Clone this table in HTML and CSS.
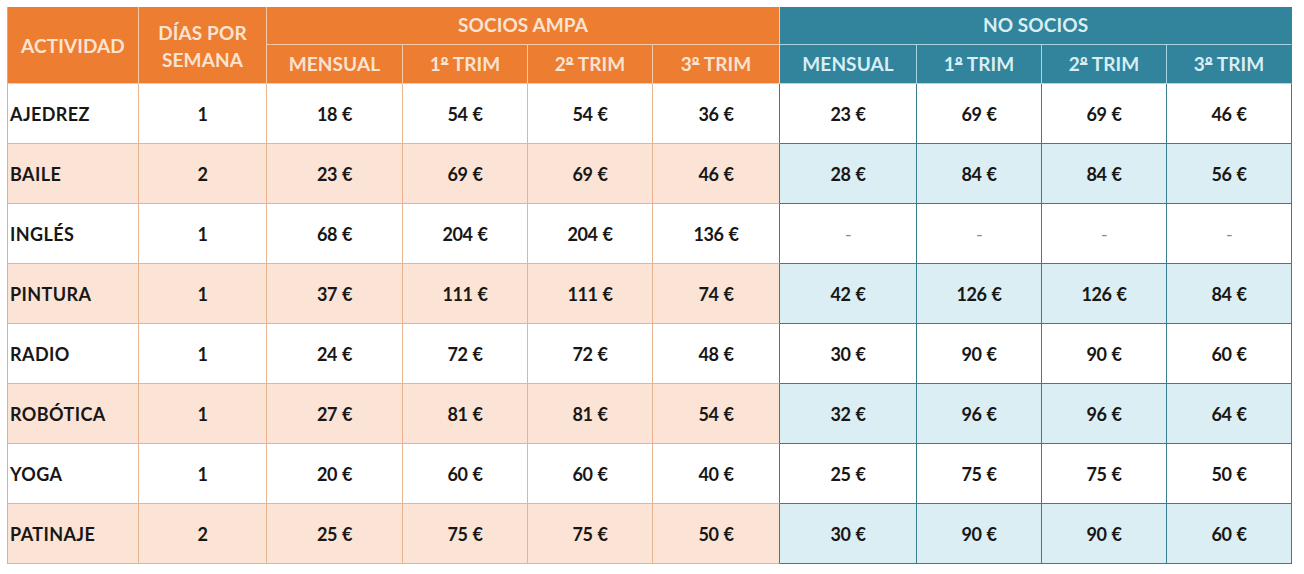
FILE: index.html
```html
<!DOCTYPE html>
<html lang="es">
<head>
<meta charset="utf-8">
<title>Actividades extraescolares</title>
<link rel="stylesheet" href="styles.css">
</head>
<body>
<div class="wrap">
<table class="tarifas">
  <colgroup>
    <col class="c-act"><col class="c-dias">
    <col class="c-m1"><col class="c-t"><col class="c-t"><col class="c-t3">
    <col class="c-m2"><col class="c-t"><col class="c-t"><col class="c-t">
  </colgroup>
  <thead>
    <tr class="h1">
      <th class="o first" rowspan="2">ACTIVIDAD</th>
      <th class="o dias" rowspan="2">DÍAS POR<br>SEMANA</th>
      <th class="o grp" colspan="4">SOCIOS AMPA</th>
      <th class="b grp last" colspan="4">NO SOCIOS</th>
    </tr>
    <tr class="h2">
      <th class="o">MENSUAL</th>
      <th class="o">1<span class="ord">º</span> TRIM</th>
      <th class="o">2<span class="ord">º</span> TRIM</th>
      <th class="o edge">3<span class="ord">º</span> TRIM</th>
      <th class="b">MENSUAL</th>
      <th class="b">1<span class="ord">º</span> TRIM</th>
      <th class="b">2<span class="ord">º</span> TRIM</th>
      <th class="b last">3<span class="ord">º</span> TRIM</th>
    </tr>
  </thead>
  <tbody>
    <tr><td class="name">AJEDREZ</td><td class="o">1</td><td class="o">18 €</td><td class="o">54 €</td><td class="o">54 €</td><td class="o edge">36 €</td><td class="b">23 €</td><td class="b">69 €</td><td class="b">69 €</td><td class="b">46 €</td></tr>
    <tr class="alt"><td class="name">BAILE</td><td class="o">2</td><td class="o">23 €</td><td class="o">69 €</td><td class="o">69 €</td><td class="o edge">46 €</td><td class="b">28 €</td><td class="b">84 €</td><td class="b">84 €</td><td class="b">56 €</td></tr>
    <tr><td class="name">INGLÉS</td><td class="o">1</td><td class="o">68 €</td><td class="o">204 €</td><td class="o">204 €</td><td class="o edge">136 €</td><td class="b dash">-</td><td class="b dash">-</td><td class="b dash">-</td><td class="b dash">-</td></tr>
    <tr class="alt"><td class="name">PINTURA</td><td class="o">1</td><td class="o">37 €</td><td class="o">111 €</td><td class="o">111 €</td><td class="o edge">74 €</td><td class="b">42 €</td><td class="b">126 €</td><td class="b">126 €</td><td class="b">84 €</td></tr>
    <tr><td class="name">RADIO</td><td class="o">1</td><td class="o">24 €</td><td class="o">72 €</td><td class="o">72 €</td><td class="o edge">48 €</td><td class="b">30 €</td><td class="b">90 €</td><td class="b">90 €</td><td class="b">60 €</td></tr>
    <tr class="alt"><td class="name">ROBÓTICA</td><td class="o">1</td><td class="o">27 €</td><td class="o">81 €</td><td class="o">81 €</td><td class="o edge">54 €</td><td class="b">32 €</td><td class="b">96 €</td><td class="b">96 €</td><td class="b">64 €</td></tr>
    <tr><td class="name">YOGA</td><td class="o">1</td><td class="o">20 €</td><td class="o">60 €</td><td class="o">60 €</td><td class="o edge">40 €</td><td class="b">25 €</td><td class="b">75 €</td><td class="b">75 €</td><td class="b">50 €</td></tr>
    <tr class="alt"><td class="name">PATINAJE</td><td class="o">2</td><td class="o">25 €</td><td class="o">75 €</td><td class="o">75 €</td><td class="o edge">50 €</td><td class="b">30 €</td><td class="b">90 €</td><td class="b">90 €</td><td class="b">60 €</td></tr>
  </tbody>
</table>
</div>
</body>
</html>
```

FILE: styles.css
```css
html, body {
  margin: 0;
  padding: 0;
  background: #ffffff;
}

.wrap {
  padding: 7px 0 0 7px;
}

.tarifas {
  border-collapse: separate;
  border-spacing: 0;
  table-layout: fixed;
  width: 1285px;
  font-family: Lato, "Open Sans", "Liberation Sans", sans-serif;
  font-weight: 700;
  color: #181616;
}

.c-act { width: 132px; }
.c-dias { width: 128px; }
.c-m1 { width: 136px; }
.c-t { width: 125px; }
.c-t3 { width: 127px; }
.c-m2 { width: 137px; }

.tarifas th,
.tarifas td {
  box-sizing: border-box;
  padding: 0;
  text-align: center;
  vertical-align: middle;
  border-right: 1px solid;
  border-bottom: 1px solid;
}

/* header */
.tarifas th {
  font-size: 19px;
  font-weight: 700;
  letter-spacing: 0.1px;
  line-height: 22px;
}
.tarifas th.o {
  background: #ed7d31;
  color: #fbe3d2;
  border-color: #f6c9a8;
}
.tarifas th.b {
  background: #31849b;
  color: #d9eef3;
  border-color: #a9d3de;
}
.tarifas th.first {
  border-left: 1px solid #f0a070;
}
.tarifas th.o.edge {
  border-right-color: #e9d6c6;
}
.tarifas th.b.last {
  border-right-color: #31849b;
}
.tarifas .h1 th {
  height: 38px;
  padding-top: 1px;
}
.tarifas .h1 th.grp {
  vertical-align: top;
  padding-top: 7px;
}
.tarifas .h2 th {
  height: 39px;
}
.tarifas th.dias {
  line-height: 27px;
  padding-top: 2px;
}
.ord {
  text-decoration: underline;
  text-decoration-thickness: 2px;
  text-underline-offset: -0.42em;
  text-decoration-skip-ink: none;
}

/* body */
.tarifas td {
  height: 60px;
  font-size: 18px;
  letter-spacing: -0.4px;
  word-spacing: 1px;
  background: #ffffff;
}
.tarifas td.name {
  text-align: left;
  padding-left: 2px;
  letter-spacing: 0.4px;
  word-spacing: 0;
  border-left: 1px solid #c9b7a8;
  border-right-color: #e7b48f;
  border-bottom-color: #e7b48f;
}
.tarifas td.o {
  border-color: #e7b48f;
}
.tarifas td.o.edge {
  border-right-color: #3a7d8e;
}
.tarifas td.b {
  border-color: #3a7d8e;
}
.tarifas td.dash {
  color: #8a8a8a;
  font-weight: 400;
}

.tarifas tr.alt td.name,
.tarifas tr.alt td.o {
  background: #fbe4d5;
}
.tarifas tr.alt td.b {
  background: #daeef3;
}
```
